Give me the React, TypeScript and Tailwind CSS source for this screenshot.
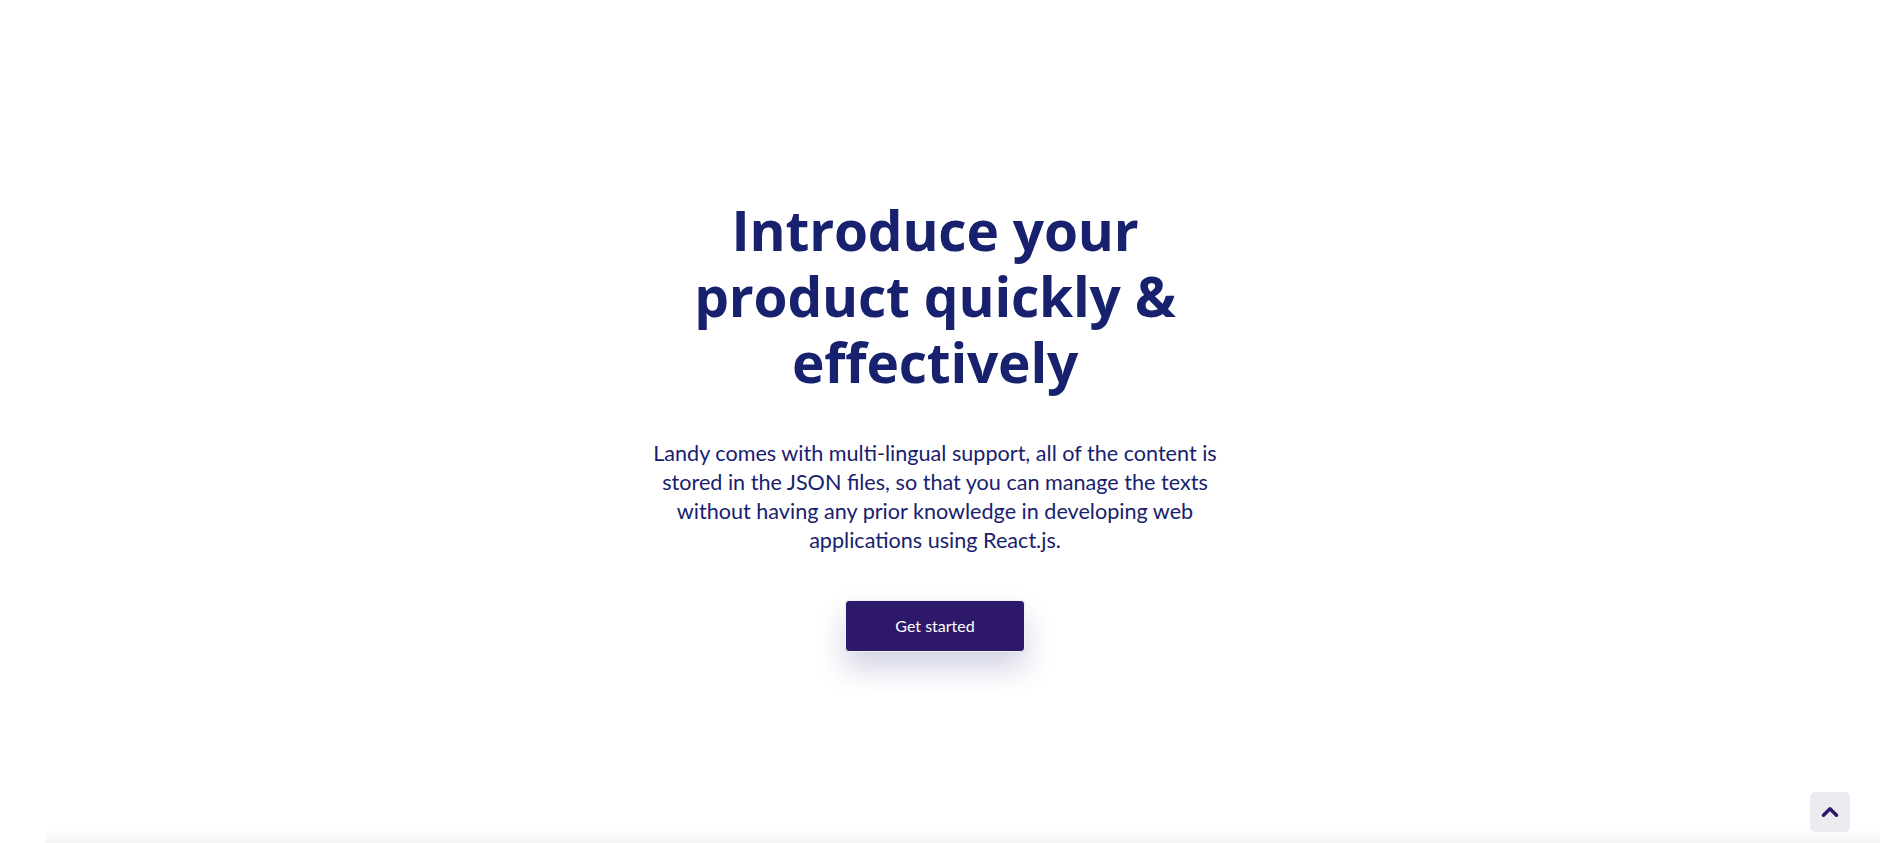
import { ChevronUp } from "lucide-react";

const Hero = () => {
  return (
    <section className="flex flex-col items-center pt-[197px] pr-[10px] h-[830px]">
      <div className="flex flex-col items-center max-w-[590px] text-center">
        <h1 className="font-['Open_Sans',sans-serif] font-bold text-[55px] leading-[66px] tracking-[-0.2px] text-[#18216d] w-[520px]">
          Introduce your product quickly &amp; effectively
        </h1>
        <p className="mt-[44px] w-[580px] font-['Lato',sans-serif] font-normal text-[21.6px] leading-[29px] text-[#18216d]">
          Landy comes with multi-lingual support, all of the content is stored
          in the JSON files, so that you can manage the texts without having any
          prior knowledge in developing web applications using React.js.
        </p>
        <button className="mt-[45px] w-[180px] h-[52px] rounded-[4px] bg-[#2e186a] text-white font-['Lato',sans-serif] text-[16px] border border-[#edf3f5] shadow-[0_16px_30px_rgba(23,31,114,0.2)]">
          Get started
        </button>
      </div>
    </section>
  );
};

export default function App() {
  return (
    <div className="relative min-h-[843px] bg-white overflow-hidden">
      <Hero />
      {/* next section peeking in at the bottom */}
      <div className="ml-[45px] h-[13px] bg-gradient-to-b from-white to-[#f5f5f5]" />
      <button className="fixed right-[30px] bottom-[11px] w-[40px] h-[40px] rounded-[5px] bg-[#ebecf0] flex items-center justify-center">
        <ChevronUp className="w-[26px] h-[26px] text-[#2e186a]" strokeWidth={3.2} />
      </button>
    </div>
  );
}
